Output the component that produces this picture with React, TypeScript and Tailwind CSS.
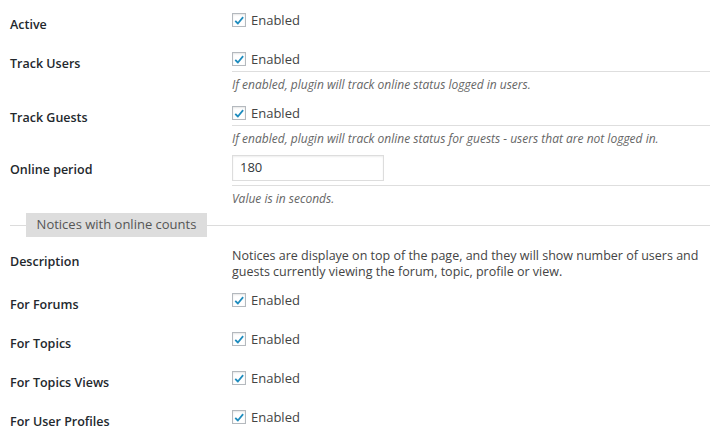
const font = { fontFamily: '"Open Sans", "Noto Sans", Arial, sans-serif' };

const Check = () => (
  <div className="flex h-[20px] items-center gap-[5px] leading-[20px]">
    <span className="flex h-[14px] w-[14px] items-center justify-center border border-[#b4b9be] bg-white shadow-[inset_0_1px_2px_rgba(0,0,0,0.1)]">
      <svg viewBox="0 0 16 16" className="h-[13px] w-[13px]">
        <path d="M3 8.5 L6.5 12 L13.5 3.5" fill="none" stroke="#1e8cbe" strokeWidth="2.4" strokeLinejoin="round" />
      </svg>
    </span>
    <span>Enabled</span>
  </div>
);

const Row = ({
  label,
  labelPad = "pt-[15px]",
  children,
}: {
  label: string;
  labelPad?: string;
  children: React.ReactNode;
}) => (
  <div className="flex">
    <div className={`w-[232px] shrink-0 pl-[10px] text-[12.5px] leading-[20px] font-semibold text-[#23282d] ${labelPad}`}>
      {label}
    </div>
    <div className="flex-1 pr-[10px]">{children}</div>
  </div>
);

const Desc = ({ children }: { children: React.ReactNode }) => (
  <p className="mt-[5px] text-[12px] leading-[16px] italic text-[#666]">{children}</p>
);

export default function App() {
  return (
    <div className="h-[442px] w-[720px] overflow-hidden bg-white text-[13px] text-[#444]" style={font}>
      <Row label="Active">
        <div className="pt-[10px] pb-[9px]">
          <Check />
        </div>
      </Row>

      <Row label="Track Users">
        <div className="border-b border-[#dedede] pt-[10px] pb-[2px]">
          <Check />
        </div>
        <Desc>If enabled, plugin will track online status logged in users.</Desc>
      </Row>

      <Row label="Track Guests">
        <div className="border-b border-[#dedede] pt-[10px] pb-[2px]">
          <Check />
        </div>
        <Desc>If enabled, plugin will track online status for guests - users that are not logged in.</Desc>
      </Row>

      <Row label="Online period" labelPad="pt-[13px]">
        <div className="border-b border-[#dedede] pt-[8px] pb-[4px]">
          <div className="flex h-[26px] w-[152px] items-center border border-[#ddd] bg-white px-[7px] text-[13px] text-[#32373c] shadow-[inset_0_1px_2px_rgba(0,0,0,0.07)]">
            180
          </div>
        </div>
        <Desc>Value is in seconds.</Desc>
      </Row>

      <div className="mt-[6px] flex items-center pl-[10px] pr-[10px]">
        <div className="h-px w-[16px] bg-[#dcdcdc]" />
        <div className="flex h-[24px] w-[181px] items-center justify-center bg-[#dddddd] text-[13px] text-[#555]">
          Notices with online counts
        </div>
        <div className="h-px flex-1 bg-[#dcdcdc]" />
      </div>

      <Row label="Description">
        <p className="pt-[11px] text-[12.5px] leading-[16px] text-[#444]">
          Notices are displaye on top of the page, and they will show number of users and guests currently viewing the forum, topic, profile or view.
        </p>
      </Row>

      {["For Forums", "For Topics", "For Topics Views", "For User Profiles"].map((l) => (
        <Row key={l} label={l}>
          <div className="pt-[10px] pb-[9px]">
            <Check />
          </div>
        </Row>
      ))}
    </div>
  );
}
